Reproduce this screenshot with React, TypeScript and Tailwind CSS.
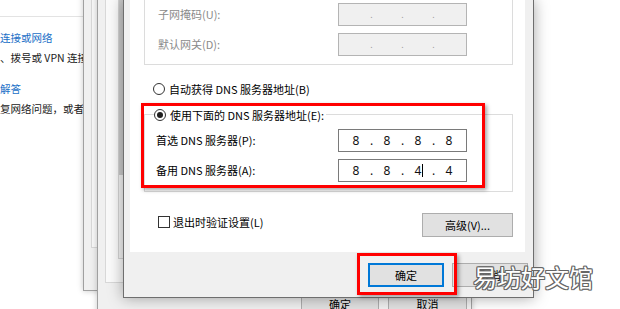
import React from "react";

function Radio({ checked }: { checked?: boolean }) {
  return (
    <span className="w-[12px] h-[12px] rounded-full border border-[#333333] bg-white flex items-center justify-center shrink-0">
      {checked && <span className="w-[6px] h-[6px] rounded-full bg-[#1f1f1f]" />}
    </span>
  );
}

function IpBox({
  values,
  disabled,
  cursorCell,
}: {
  values: string[];
  disabled?: boolean;
  cursorCell?: number;
}) {
  return (
    <div
      className={
        disabled
          ? "w-[129px] h-[23px] border border-[#b4b4b4] bg-[#f0f0f0] flex items-center pl-[5px] text-[#9a9a9a] font-['Noto_Sans',sans-serif] text-[12px]"
          : "w-[129px] h-[23px] border border-[#7a7a7a] bg-white flex items-center pl-[5px] text-[#111111] font-['Noto_Sans',sans-serif] text-[12px]"
      }
    >
      {[0, 1, 2, 3].map((i) => (
        <React.Fragment key={i}>
          <span className="w-[24px] h-[16px] leading-[16px] text-center relative">
            {values[i]}
            {cursorCell === i && (
              <span className="absolute left-[16px] top-[1px] w-[1px] h-[13px] bg-black" />
            )}
          </span>
          {i < 3 && (
            <span
              className={
                disabled
                  ? "w-[7px] h-[16px] leading-[16px] text-center text-[9px]"
                  : "w-[7px] h-[16px] leading-[16px] text-center"
              }
            >
              .
            </span>
          )}
        </React.Fragment>
      ))}
    </div>
  );
}

function WinButton({ children, primary }: { children: React.ReactNode; primary?: boolean }) {
  return (
    <div
      className={
        primary
          ? "w-[76px] h-[24px] border-2 border-[#0078d7] bg-[#e1e1e1] flex items-center justify-center text-[11px]"
          : "w-[76px] h-[24px] border border-[#adadad] bg-[#e1e1e1] flex items-center justify-center text-[11px]"
      }
    >
      {children}
    </div>
  );
}

export default function App() {
  return (
    <div className="relative w-[620px] h-[309px] overflow-hidden bg-white font-['Noto_Sans_CJK_SC',sans-serif] text-[11px] text-black">
      {/* background control panel window */}
      <div className="absolute inset-0 bg-white">
        <div className="w-[83px] h-full overflow-hidden">
          <div className="h-[17px] border-b border-[#e3e3e3]" />
          <div className="pt-[11px] flex flex-col whitespace-nowrap text-[10.5px] leading-[20px] text-[#222222]">
            <span className="text-[#1a6fc7]">连接或网络</span>
            <span>、拨号或 VPN 连接</span>
            <span className="mt-[11px] text-[#1a6fc7]">解答</span>
            <span>复网络问题，或者获取</span>
          </div>
        </div>
      </div>

      {/* window A (behind) */}
      <div className="absolute left-[83px] top-[-10px] w-[300px] h-[301px] bg-[#f0f0f0] border border-[#a0a0a0] shadow-[0_0_6px_rgba(0,0,0,0.22)]">
        <div className="ml-[7px] h-[257px] w-[250px] border-l border-b border-[#d8d8d8] bg-[#f8f8f8]" />
      </div>

      {/* window B (behind) */}
      <div className="absolute left-[97px] top-[-10px] w-[375px] h-[340px] bg-[#f0f0f0] border border-[#a0a0a0] shadow-[0_0_6px_rgba(0,0,0,0.22)] flex flex-col">
        <div className="ml-[7px] h-[292px] w-[355px] border-l border-b border-[#d8d8d8] bg-[#fafafa] flex">
          <div className="ml-[12px] w-[6px] h-[268px] border border-[#d4d4d4] bg-[#f3f3f3] flex flex-col">
            <div className="h-[183px] bg-[#c9c9c9]" />
          </div>
        </div>
        <div className="mt-[9px] flex justify-end gap-[9px] pr-[4px]">
          <div className="w-[78px] h-[24px] border border-[#adadad] bg-[#e1e1e1] flex items-center justify-center text-[11px]">
            确定
          </div>
          <div className="w-[79px] h-[24px] border border-[#adadad] bg-[#e1e1e1] flex items-center justify-center text-[11px]">
            取消
          </div>
        </div>
      </div>

      {/* main dialog */}
      <div className="absolute left-[123px] top-0 w-[411px] h-[298px] bg-[#f0f0f0] border-x border-b border-[#6e6e6e] shadow-[0_0_14px_rgba(0,0,0,0.35)] flex flex-col">
        <div className="ml-[6px] mr-[8px] h-[252px] bg-white overflow-hidden flex flex-col">
          {/* IP group box */}
          <div className="ml-[14px] w-[369px] mt-[-12px] pt-[14px] pb-[8px] pl-[13px] border border-[#dcdcdc] grid grid-cols-[180px_129px] gap-y-[7px] items-center text-[#8a8a8a]">
            <span>子网掩码(U):</span>
            <IpBox values={["", "", "", ""]} disabled />
            <span>默认网关(D):</span>
            <IpBox values={["", "", "", ""]} disabled />
          </div>

          {/* auto DNS radio */}
          <div className="mt-[16px] h-[16px] pl-[23px] flex items-center gap-[4px]">
            <Radio />
            <span>自动获得 DNS 服务器地址(B)</span>
          </div>

          {/* DNS group box */}
          <div className="relative mt-[17px] ml-[14px] w-[369px] pt-[14px] pb-[9px] pl-[11px] border border-[#dcdcdc] grid grid-cols-[182px_129px] gap-y-[7px] items-center">
            <div className="absolute left-[9px] top-[-8px] h-[16px] pr-[2px] bg-white flex items-center gap-[4px]">
              <Radio checked />
              <span>使用下面的 DNS 服务器地址(E):</span>
            </div>
            <span>首选 DNS 服务器(P):</span>
            <IpBox values={["8", "8", "8", "8"]} />
            <span>备用 DNS 服务器(A):</span>
            <IpBox values={["8", "8", "4", "4"]} cursorCell={2} />
          </div>

          {/* checkbox + advanced */}
          <div className="mt-[21px] pl-[28px] pr-[12px] flex justify-between items-start">
            <div className="mt-[1px] flex items-center gap-[3px]">
              <span className="w-[12px] h-[12px] border border-[#333333] bg-white" />
              <span>退出时验证设置(L)</span>
            </div>
            <div className="w-[91px] h-[24px] border border-[#adadad] bg-[#e1e1e1] flex items-center justify-center">
              高级(V)...
            </div>
          </div>
        </div>

        {/* footer */}
        <div className="pt-[11px] pr-[5px] flex justify-end gap-[8px]">
          <WinButton primary>确定</WinButton>
          <WinButton>取消</WinButton>
        </div>
      </div>

      {/* red highlight boxes */}
      <div className="absolute left-[141px] top-[103px] w-[344px] h-[85px] border-[3px] border-[#ff0000] shadow-[2px_2px_4px_rgba(0,0,0,0.35)]" />
      <div className="absolute left-[357px] top-[253px] w-[100px] h-[42px] border-[3px] border-[#ff0000] shadow-[2px_2px_4px_rgba(0,0,0,0.35)]" />

      {/* watermark */}
      <div className="absolute left-[473px] top-[263px] text-[24px] leading-[28px] text-white whitespace-nowrap [text-shadow:1px_0_#666,-1px_0_#666,0_1px_#666,0_-1px_#666,1px_1px_#666,-1px_-1px_#666,1px_-1px_#666,-1px_1px_#666]">
        易坊好文馆
      </div>
    </div>
  );
}
